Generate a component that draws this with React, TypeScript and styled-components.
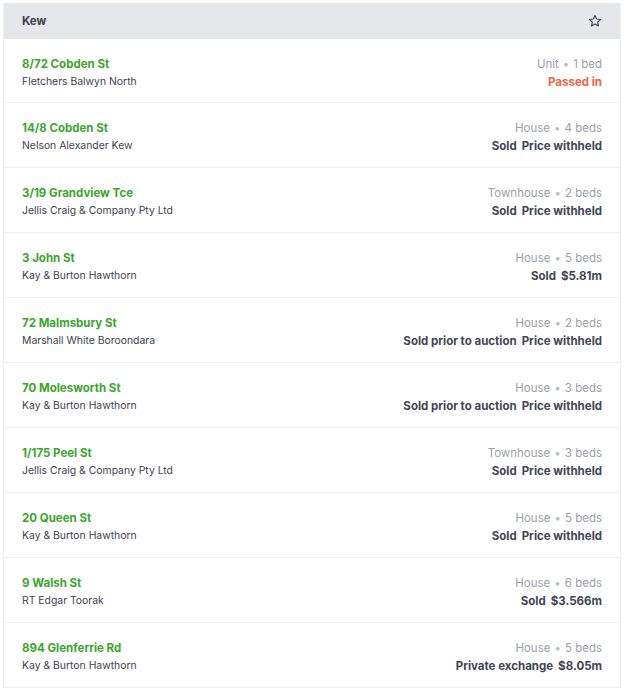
import React from "react";
import styled, { createGlobalStyle } from "styled-components";

const Global = createGlobalStyle`
  html, body { margin: 0; padding: 0; background: #ffffff; }
  body { font-family: Inter, "Noto Sans", sans-serif; -webkit-font-smoothing: antialiased; }
`;

const Page = styled.div`
  padding: 3px 3px 0 3px;
  width: 618px;
`;

const Card = styled.section`
  border: 1px solid #eef0f3;
  border-top: none;
  background: #fff;
`;

const Header = styled.header`
  display: flex;
  align-items: center;
  justify-content: space-between;
  height: 36px;
  padding: 0 18px;
  background: #e5e7eb;
`;

const Title = styled.h2`
  margin: 0;
  font-size: 11.5px;
  font-weight: 700;
  color: #3b404b;
`;

const StarButton = styled.button`
  border: none;
  background: none;
  padding: 0;
  display: flex;
  color: #3f4452;
`;

const Row = styled.div`
  display: flex;
  justify-content: space-between;
  align-items: center;
  padding: 16px 18px 11px 18px;
  border-bottom: 1px solid #eceef1;
  line-height: 18px;
  &:not(:first-of-type) {
    padding-bottom: 12px;
  }
`;

const Col = styled.div<{ $right?: boolean }>`
  display: flex;
  flex-direction: column;
  align-items: ${(p) => (p.$right ? "flex-end" : "flex-start")};
  height: 36px;
`;

const Address = styled.span`
  font-size: 11.5px;
  font-weight: 700;
  color: #3aa62c;
`;

const Agent = styled.span`
  font-size: 10.4px;
  color: #3e4250;
`;

const Meta = styled.span`
  font-size: 11.5px;
  color: #9a9fa8;
`;

const Dot = styled.span`
  margin: 0 4px;
  color: #b8bcc3;
`;

const Result = styled.span<{ $tone?: "red" | "dark" }>`
  display: flex;
  gap: 5px;
  font-size: 11.5px;
  font-weight: 700;
  color: ${(p) => (p.$tone === "red" ? "#f2613f" : "#3f4555")};
`;

type Sale = {
  address: string;
  agent: string;
  type: string;
  beds: number;
  result: string;
  price?: string;
  red?: boolean;
};

const sales: Sale[] = [
  { address: "8/72 Cobden St", agent: "Fletchers Balwyn North", type: "Unit", beds: 1, result: "Passed in", red: true },
  { address: "14/8 Cobden St", agent: "Nelson Alexander Kew", type: "House", beds: 4, result: "Sold", price: "Price withheld" },
  { address: "3/19 Grandview Tce", agent: "Jellis Craig & Company Pty Ltd", type: "Townhouse", beds: 2, result: "Sold", price: "Price withheld" },
  { address: "3 John St", agent: "Kay & Burton Hawthorn", type: "House", beds: 5, result: "Sold", price: "$5.81m" },
  { address: "72 Malmsbury St", agent: "Marshall White Boroondara", type: "House", beds: 2, result: "Sold prior to auction", price: "Price withheld" },
  { address: "70 Molesworth St", agent: "Kay & Burton Hawthorn", type: "House", beds: 3, result: "Sold prior to auction", price: "Price withheld" },
  { address: "1/175 Peel St", agent: "Jellis Craig & Company Pty Ltd", type: "Townhouse", beds: 3, result: "Sold", price: "Price withheld" },
  { address: "20 Queen St", agent: "Kay & Burton Hawthorn", type: "House", beds: 5, result: "Sold", price: "Price withheld" },
  { address: "9 Walsh St", agent: "RT Edgar Toorak", type: "House", beds: 6, result: "Sold", price: "$3.566m" },
  { address: "894 Glenferrie Rd", agent: "Kay & Burton Hawthorn", type: "House", beds: 5, result: "Private exchange", price: "$8.05m" },
];

const Star = () => (
  <svg width="14" height="14" viewBox="0 0 24 24" fill="none" stroke="currentColor" strokeWidth="2" strokeLinejoin="round">
    <path d="M12 2.5l2.9 6.1 6.6.8-4.9 4.6 1.3 6.6L12 17.3l-5.9 3.3 1.3-6.6-4.9-4.6 6.6-.8z" />
  </svg>
);

export default function App() {
  return (
    <>
      <Global />
      <Page>
        <Card>
          <Header>
            <Title>Kew</Title>
            <StarButton aria-label="Favourite">
              <Star />
            </StarButton>
          </Header>
          {sales.map((s) => (
            <Row key={s.address}>
              <Col>
                <Address>{s.address}</Address>
                <Agent>{s.agent}</Agent>
              </Col>
              <Col $right>
                <Meta>
                  {s.type}
                  <Dot>•</Dot>
                  {s.beds} {s.beds === 1 ? "bed" : "beds"}
                </Meta>
                <Result $tone={s.red ? "red" : "dark"}>
                  <span>{s.result}</span>
                  {s.price && <span>{s.price}</span>}
                </Result>
              </Col>
            </Row>
          ))}
        </Card>
      </Page>
    </>
  );
}
